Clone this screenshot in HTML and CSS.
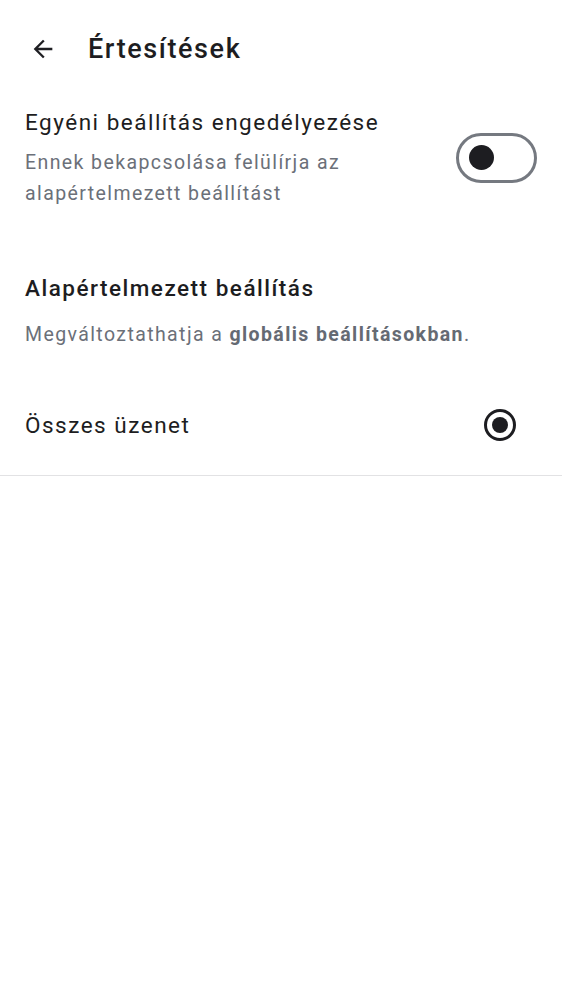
FILE: index.html
```html
<!DOCTYPE html>
<html lang="hu">
<head>
<meta charset="utf-8">
<link rel="stylesheet" href="styles.css">
</head>
<body>
<header class="topbar">
  <svg class="back" width="28" height="28" viewBox="0 0 24 24"><path d="M20 11H7.83l5.59-5.59L12 4l-8 8 8 8 1.41-1.41L7.83 13H20v-2z" fill="#1f1f23"/></svg>
  <h1 class="title">Értesítések</h1>
</header>
<section class="row toggle-row">
  <div class="texts">
    <div class="label">Egyéni beállítás engedélyezése</div>
    <div class="desc">Ennek bekapcsolása felülírja az<br>alapértelmezett beállítást</div>
  </div>
  <div class="switch"><div class="thumb"></div></div>
</section>
<section class="default">
  <div class="heading">Alapértelmezett beállítás</div>
  <div class="desc">Megváltoztathatja a <b>globális beállításokban</b>.</div>
</section>
<section class="row radio-row">
  <div class="label">Összes üzenet</div>
  <div class="radio"><div class="dot"></div></div>
</section>
</body>
</html>
```
FILE: styles.css
```css
body {
  margin: 0;
  background: #fff;
  font-family: Roboto, "Noto Sans", sans-serif;
  color: #1d1d21;
}
.topbar {
  display: flex;
  align-items: center;
  height: 100px;
  padding: 0 0 2px 29px;
  box-sizing: border-box;
}
.back { display: block; }
.title {
  margin: 0 0 0 31px;
  font-size: 27px;
  font-weight: 500;
  letter-spacing: 1.6px;
}
.row {
  display: flex;
  align-items: center;
  justify-content: space-between;
  padding: 0 25px;
}
.toggle-row { padding-top: 6px; }
.label {
  font-size: 22.5px;
  line-height: 32px;
  letter-spacing: 1.5px;
}
.desc {
  font-size: 19.5px;
  line-height: 31px;
  letter-spacing: 1.4px;
  color: #6b7079;
  margin-top: 9px;
}
.desc b { font-weight: 700; color: #656a73; }
.switch {
  height: 44px;
  width: 65px;
  border: 3px solid #757980;
  border-radius: 26px;
  display: flex;
  align-items: center;
  padding-left: 10px;
}
.thumb {
  width: 25px;
  height: 25px;
  border-radius: 50%;
  background: #1d1d21;
}
.default {
  padding: 63px 25px 0;
}
.heading {
  font-size: 22.5px;
  font-weight: 500;
  line-height: 32px;
  letter-spacing: 1.5px;
}
.default .desc { margin-top: 15px; }
.radio-row {
  height: 100px;
  margin-top: 25px;
  border-bottom: 1px solid #e2e2e4;
  padding-right: 46px;
}
.radio {
  width: 26px;
  height: 26px;
  border: 3px solid #1d1d21;
  border-radius: 50%;
  display: flex;
  align-items: center;
  justify-content: center;
}
.dot {
  width: 16px;
  height: 16px;
  border-radius: 50%;
  background: #1d1d21;
}
```
